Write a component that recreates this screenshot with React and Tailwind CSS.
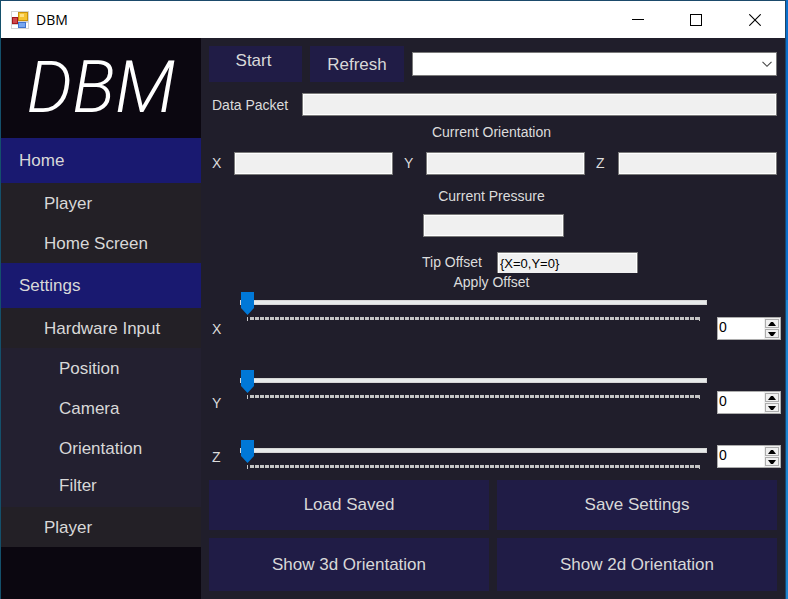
import { useState } from "react";

const fieldClass =
  "block h-[23px] w-full min-w-0 rounded-none border border-[#7a7a7a] bg-[#f0f0f0] px-[2px] text-[13px] text-black shadow-[inset_0_0_0_1px_white] outline-none";

function AppIcon() {
  return (
    <svg width="18" height="18" viewBox="0 0 18 18" aria-hidden="true">
      <rect width="18" height="18" fill="#d4d4d4" />
      <rect x="1" y="1" width="6" height="5" fill="#fff" />
      <rect x="1" y="14" width="6" height="3" fill="#fff" />
      <rect x="14" y="12" width="3" height="5" fill="#fff" />
      <rect x="7" y="1" width="10" height="9" fill="#c8920c" />
      <rect x="8" y="2" width="8" height="7" fill="#f5c332" />
      <rect x="9" y="3" width="4" height="3" fill="#ffe184" />
      <rect x="1" y="6" width="6" height="7" fill="#a5161a" />
      <rect x="2" y="7" width="4" height="5" fill="#d0474b" />
      <rect x="7" y="11" width="8" height="6" fill="#3f74cf" />
      <rect x="8" y="12" width="6" height="4" fill="#78a7f0" />
    </svg>
  );
}

function TitleBar() {
  return (
    <header className="flex h-[37px] items-center bg-white pl-[10px] text-black">
      <AppIcon />
      <h1 className="ml-[7px] flex-1 font-['Open_Sans',sans-serif] text-[14px]">DBM</h1>
      <button aria-label="Minimize" className="flex h-full w-[58px] items-center justify-center">
        <svg width="12" height="12" viewBox="0 0 12 12" shapeRendering="crispEdges" aria-hidden="true">
          <path d="M0 5.5H12" stroke="#000" />
        </svg>
      </button>
      <button aria-label="Maximize" className="flex h-full w-[58px] items-center justify-center">
        <svg width="12" height="12" viewBox="0 0 12 12" shapeRendering="crispEdges" aria-hidden="true">
          <rect x="0.5" y="0.5" width="11" height="11" fill="none" stroke="#000" />
        </svg>
      </button>
      <button aria-label="Close" className="flex h-full w-[60px] items-center justify-center">
        <svg width="12" height="12" viewBox="0 0 12 12" aria-hidden="true">
          <path d="M0.3 0.3L11.7 11.7M11.7 0.3L0.3 11.7" stroke="#000" strokeWidth="1.1" />
        </svg>
      </button>
    </header>
  );
}

function NavGroup({ children }) {
  return (
    <button className="flex h-[45px] w-full items-center bg-[#191970] pl-[18px] text-left">
      {children}
    </button>
  );
}

function NavItem({ children }) {
  return (
    <button className="flex h-[40px] w-full items-center bg-[#232026] pt-[2px] pl-[43px] text-left">
      {children}
    </button>
  );
}

function NavSubItem({ children }) {
  return (
    <button className="flex h-[40px] w-full items-center pt-[2px] pl-[58px] text-left">{children}</button>
  );
}

function Sidebar() {
  return (
    <nav className="w-[200px] shrink-0 bg-[#0b0710] text-[17px] text-[#d8d8d8]">
      <div className="flex h-[100px] items-center justify-center font-['Roboto','Liberation_Sans',sans-serif] text-[72px] leading-none font-light text-white italic">
        DBM
      </div>
      <NavGroup>Home</NavGroup>
      <NavItem>Player</NavItem>
      <NavItem>Home Screen</NavItem>
      <NavGroup>Settings</NavGroup>
      <NavItem>Hardware Input</NavItem>
      <div className="bg-[#232030] pb-1">
        <NavSubItem>Position</NavSubItem>
        <NavSubItem>Camera</NavSubItem>
        <NavSubItem>Orientation</NavSubItem>
        <button className="flex h-[35px] w-full items-center pl-[58px] text-left">Filter</button>
      </div>
      <NavItem>Player</NavItem>
    </nav>
  );
}

function AxisField({ axis }) {
  return (
    <div className="flex flex-1 items-center">
      <label htmlFor={"orientation-" + axis} className="w-[22px] shrink-0">
        {axis}
      </label>
      <input id={"orientation-" + axis} readOnly className={fieldClass} />
    </div>
  );
}

function Spinner({ axis, value, onChange }) {
  const stepClass = "flex h-[9px] w-[14px] items-center justify-center border border-[#adadad]";
  return (
    <div className="flex h-[23px] w-16 shrink-0 border border-[#adadad] bg-white text-black">
      <input
        type="number"
        aria-label={axis + " offset value"}
        value={value}
        onChange={(e) => onChange(Number(e.target.value))}
        className="h-[19px] w-0 flex-1 appearance-none px-[1px] text-[14px] outline-none [-moz-appearance:textfield] [&::-webkit-inner-spin-button]:appearance-none"
      />
      <div className="flex flex-col gap-[1px] bg-[#f0f0f0] p-[1px]">
        <button aria-label={"Increase " + axis} className={stepClass} onClick={() => onChange(value + 1)}>
          <svg width="8" height="4" viewBox="0 0 8 4" aria-hidden="true">
            <path d="M0 4L3 0H5L8 4Z" fill="#000" />
          </svg>
        </button>
        <button aria-label={"Decrease " + axis} className={stepClass} onClick={() => onChange(value - 1)}>
          <svg width="8" height="4" viewBox="0 0 8 4" aria-hidden="true">
            <path d="M0 0L3 4H5L8 0Z" fill="#000" />
          </svg>
        </button>
      </div>
    </div>
  );
}

function OffsetRow({ axis, rowClass, sideClass }) {
  const [value, setValue] = useState(0);
  return (
    <div className={"flex items-start pl-1 " + rowClass}>
      <div className={sideClass}>
        <label htmlFor={"offset-" + axis} className="flex h-6 w-7 items-center">
          {axis}
        </label>
      </div>
      <div className="flex-1">
        <input
          id={"offset-" + axis}
          type="range"
          min="0"
          max="100"
          value={value}
          onChange={(e) => setValue(Number(e.target.value))}
          className="block h-[21px] w-full appearance-none bg-transparent [&::-webkit-slider-runnable-track]:h-[5px] [&::-webkit-slider-runnable-track]:border [&::-webkit-slider-runnable-track]:border-[#d6d6d6] [&::-webkit-slider-runnable-track]:bg-[#e7eaea] [&::-webkit-slider-thumb]:mt-[-9px] [&::-webkit-slider-thumb]:h-[23px] [&::-webkit-slider-thumb]:w-[13px] [&::-webkit-slider-thumb]:appearance-none [&::-webkit-slider-thumb]:bg-[#0078d7] [&::-webkit-slider-thumb]:[clip-path:polygon(0_0,100%_0,100%_70%,50%_100%,0_70%)]"
        />
        <div className="mt-1 mr-[7px] ml-[7px] h-1 border-x border-[#c4c4c4]">
          <div className="ml-[2px] h-[3px] bg-[repeating-linear-gradient(90deg,#c4c4c4_0px,#c4c4c4_4px,transparent_4px,transparent_5px)]" />
        </div>
      </div>
      <div className={"ml-[10px] " + sideClass}>
        <Spinner axis={axis} value={value} onChange={setValue} />
      </div>
    </div>
  );
}

function ActionButton({ children }) {
  return <button className="bg-[#201c46] text-[17px] text-[#d8d8d8]">{children}</button>;
}

function MainPanel() {
  return (
    <main className="flex min-w-0 flex-1 flex-col bg-[#201e2b] pt-2 pb-2 text-[14px] text-[#dcdcdc]">
      <div className="flex items-center gap-2 px-2">
        <button className="h-9 w-[93px] bg-[#201c46] pr-1 pb-[6px] text-[17px] text-[#d8d8d8]">Start</button>
        <button className="h-9 w-[94px] bg-[#201c46] pt-[2px] text-[17px] text-[#d8d8d8]">Refresh</button>
        <div className="relative flex-1">
          <select aria-label="Port" className="block h-6 w-full appearance-none rounded-none border border-[#7a7a7a] bg-white text-black outline-none" />
          <svg className="pointer-events-none absolute top-[9px] right-[5px]" width="10" height="7" viewBox="0 0 10 7" aria-hidden="true">
            <path d="M0.5 0.8L5 5.3L9.5 0.8" fill="none" stroke="#444" strokeWidth="1.1" />
          </svg>
        </div>
      </div>

      <div className="mt-[11px] flex items-center pr-2 pl-[11px]">
        <label htmlFor="packet" className="w-[90px] shrink-0 pt-[2px]">
          Data Packet
        </label>
        <input id="packet" readOnly className={fieldClass} />
      </div>

      <h2 className="mt-[6px] pr-[3px] text-center leading-5">Current Orientation</h2>
      <div className="mt-[10px] flex gap-[11px] pr-2 pl-[11px]">
        <AxisField axis="X" />
        <AxisField axis="Y" />
        <AxisField axis="Z" />
      </div>

      <label htmlFor="pressure" className="mt-[11px] pr-[3px] text-center leading-5">
        Current Pressure
      </label>
      <input id="pressure" readOnly className="mx-auto mt-2 block h-[23px] w-[141px] border border-[#7a7a7a] bg-[#f0f0f0] shadow-[inset_0_0_0_1px_white] outline-none" />

      <div className="mt-[15px] flex justify-center pl-[74px]">
        <label htmlFor="tip" className="w-[75px] leading-5">
          Tip Offset
        </label>
        <div className="h-[21px] w-[141px] overflow-hidden">
          <input id="tip" readOnly defaultValue="{X=0,Y=0}" className={fieldClass} />
        </div>
      </div>

      <h2 className="pr-[3px] text-center leading-[19px]">Apply Offset</h2>
      <div className="pr-1 pl-[7px]">
        <OffsetRow axis="X" rowClass="h-[78px]" sideClass="pt-[25px]" />
        <OffsetRow axis="Y" rowClass="h-[70px]" sideClass="pt-[21px]" />
        <OffsetRow axis="Z" rowClass="h-[40px]" sideClass="pt-[5px]" />
      </div>

      <div className="grid flex-1 grid-cols-2 grid-rows-[50px_minmax(53px,1fr)] gap-2 px-2">
        <ActionButton>Load Saved</ActionButton>
        <ActionButton>Save Settings</ActionButton>
        <ActionButton>Show 3d Orientation</ActionButton>
        <ActionButton>Show 2d Orientation</ActionButton>
      </div>
    </main>
  );
}

export default function App() {
  return (
    <div className="flex min-h-screen bg-linear-to-b from-[#0a6fcc] from-50% to-[#1c84d0] to-50% pr-[2px] font-['Liberation_Sans',Arial,sans-serif]">
      <div className="flex min-w-0 flex-1 flex-col border-t border-r border-l border-t-[#1b4a6b] border-r-[#1d4568] border-l-[#14506b]">
        <TitleBar />
        <div className="flex flex-1">
          <Sidebar />
          <MainPanel />
        </div>
      </div>
    </div>
  );
}
